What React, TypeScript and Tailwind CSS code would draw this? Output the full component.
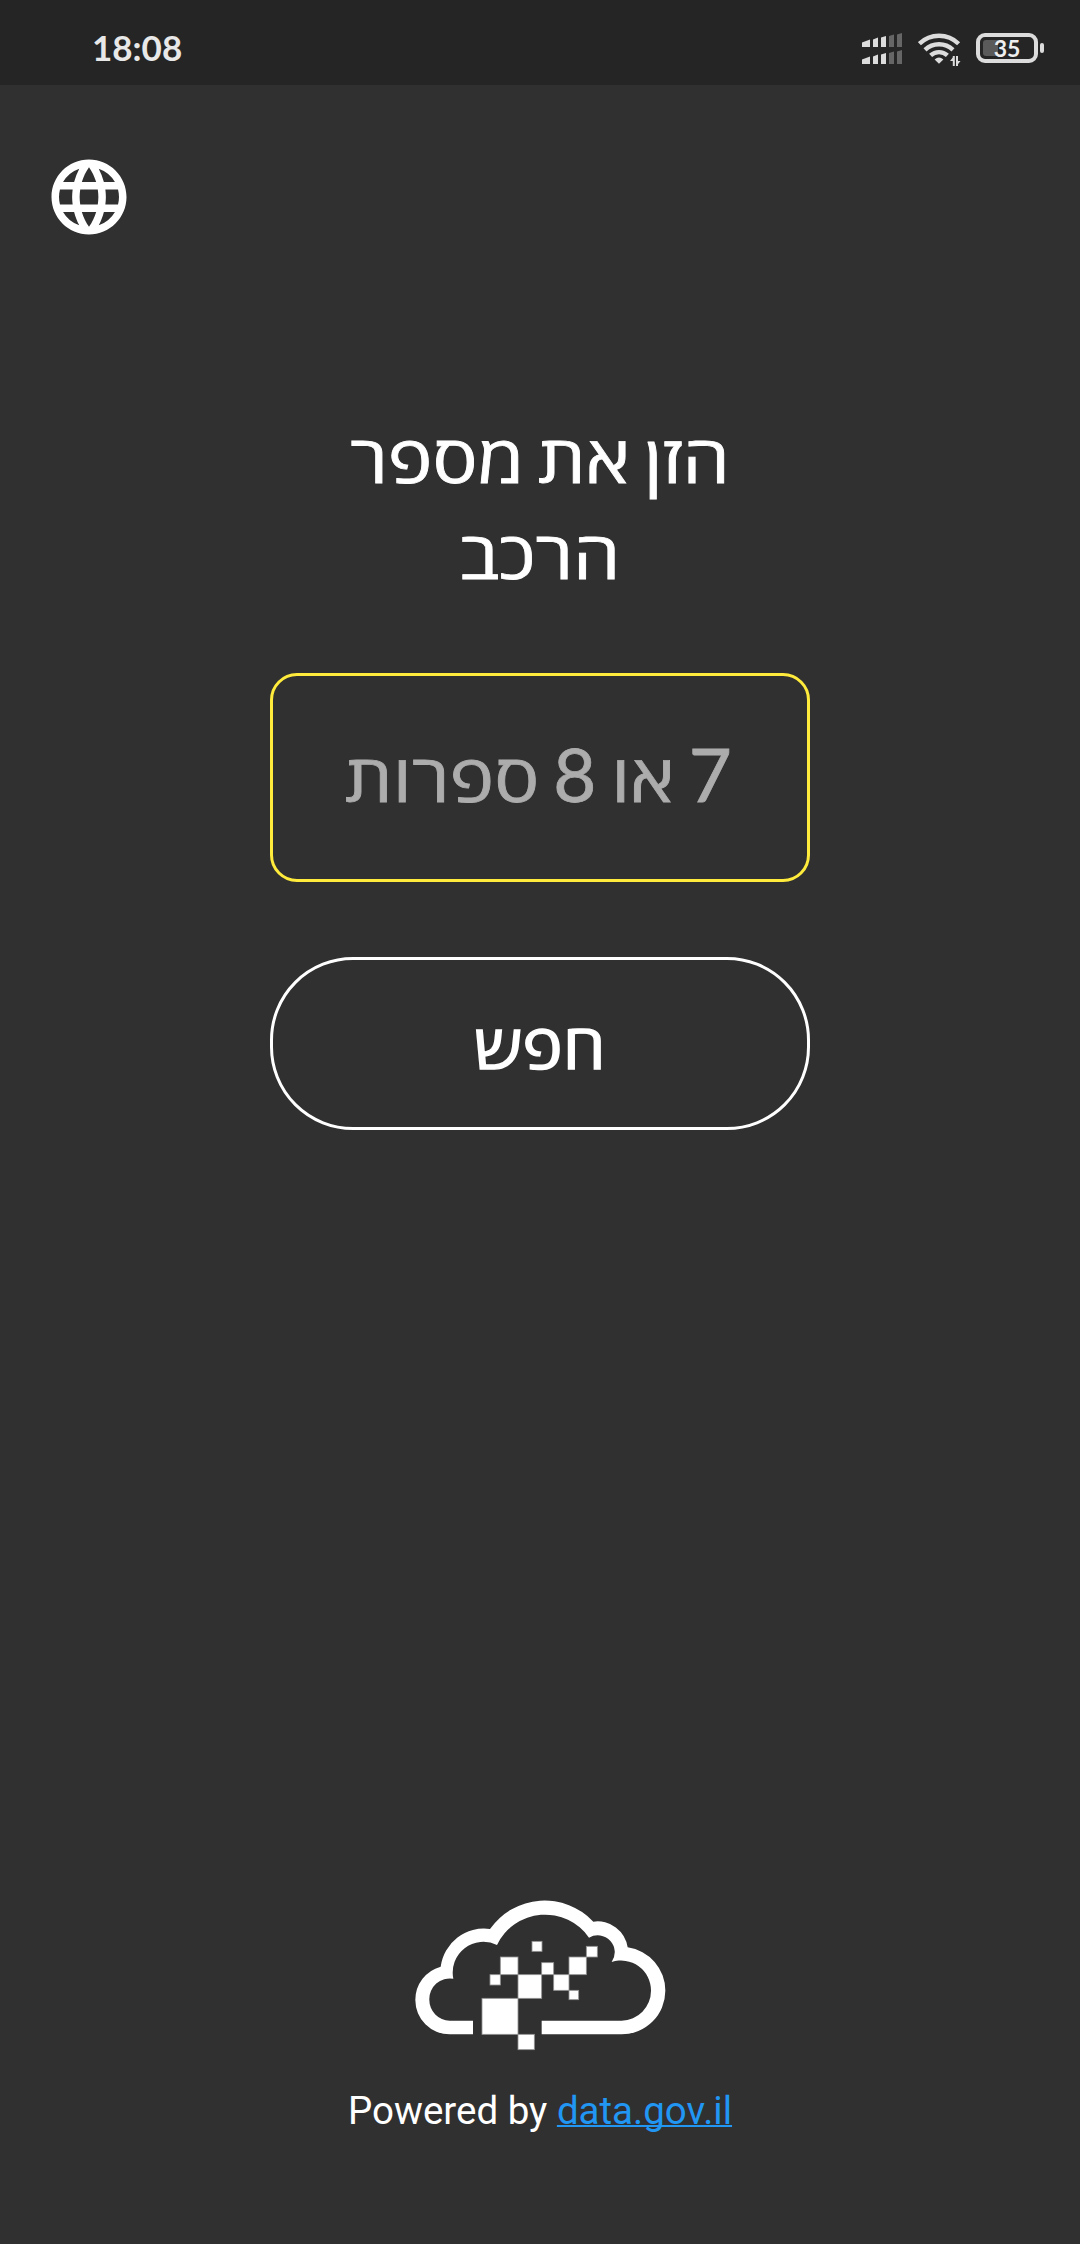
import { MdLanguage } from "react-icons/md";

function Signal() {
  const bars = ["M0 9.5L8 6.5V14H0Z", "M11 6.5L16 4.5V14H11Z", "M19 4.5L24 3V14H19Z"];
  const dim = ["M27 3L32 1.5V14H27Z", "M35 1.5L40 0V14H35Z"];
  return (
    <svg className="h-[31px] w-10" viewBox="0 0 40 31">
      {[0, 17].map((y) => (
        <g key={y} transform={`translate(0 ${y})`}>
          {bars.map((d) => <path key={d} d={d} fill="#dcdcdc" />)}
          {dim.map((d) => <path key={d} d={d} fill="#666" />)}
        </g>
      ))}
    </svg>
  );
}

function Wifi() {
  return (
    <svg className="h-[34px] w-[43px]" viewBox="0 0 43 34" fill="none" stroke="#dcdcdc" strokeWidth="4.4">
      <path d="M1.4 10.7A28 28 0 0 1 40.6 10.7" />
      <path d="M7 16.8A20.5 20.5 0 0 1 35 16.8" />
      <path d="M12.6 22.4A12.5 12.5 0 0 1 29.4 22.4" />
      <path d="M16.6 26.5Q21 22.5 25.4 26.5L21 30.8Z" fill="#dcdcdc" stroke="none" />
      <path d="M35.8 23V33M39 33V23" strokeWidth="2" />
      <path d="M32 28L36 23V28ZM42.5 28L38.5 33V28Z" fill="#dcdcdc" stroke="none" />
    </svg>
  );
}

function Battery() {
  return (
    <div className="flex items-center gap-[2px]">
      <div className="relative flex h-[30px] w-[62px] items-center justify-center rounded-[9px] border-4 border-[#dcdcdc]">
        <div className="absolute left-[3px] top-[3px] h-4 w-[15px] rounded-l-[3px] bg-[#5a5a5a]" />
        <span className="relative font-['Lato'] text-[23px] font-bold leading-none text-[#eee]">35</span>
      </div>
      <div className="h-[10px] w-1 rounded-[2px] bg-[#dcdcdc]" />
    </div>
  );
}

const squares = [
  [396, 169, 30, 30], [559, 184, 33, 32], [301, 216, 53, 53], [507, 216, 52, 53],
  [425, 233, 36, 36], [270, 269, 31, 31], [354, 269, 71, 71], [461, 269, 46, 47],
  [507, 316, 29, 28], [246, 340, 108, 108], [354, 448, 49, 46],
];

function CloudLogo() {
  return (
    <svg className="h-[180px] w-[280px]" viewBox="0 0 840 540" fill="white">
      <path d="M219 448H149A103 103 0 0 1 46 345A103 103 0 0 1 122 245A131 131 0 0 1 270 132A200 200 0 0 1 580 110A91 91 0 0 1 683 187A131 131 0 0 1 796 317A131 131 0 0 1 665 448H425V407H665A90 90 0 0 0 753 317A90 90 0 0 0 635 231A51 51 0 0 0 567 158A160 160 0 0 0 291 180A92 92 0 0 0 160 281A62 62 0 0 0 88 345A62 62 0 0 0 149 407H219Z" />
      {squares.map(([x, y, w, h]) => (
        <rect key={`${x}-${y}`} x={x} y={y} width={w} height={h} stroke="#929292" strokeWidth="2.5" />
      ))}
    </svg>
  );
}

export default function App() {
  return (
    <div className="flex h-[2244px] w-[1080px] flex-col bg-[#303030] font-['Roboto',sans-serif] text-white">
      <header className="flex h-[85px] items-start justify-between bg-[#252525] pl-[92px] pr-9">
        <span className="mt-[26px] font-['Lato'] text-[35px] font-bold leading-[42px] text-[#e8e8e8]">18:08</span>
        <div className="mt-[33px] flex items-start">
          <Signal />
          <div className="ml-[16px]"><Wifi /></div>
          <div className="ml-[15px]"><Battery /></div>
        </div>
      </header>
      <main className="flex flex-1 flex-col items-center">
        <button className="ml-[44px] mt-[67px] self-start" aria-label="Language">
          <MdLanguage className="size-[90px]" />
        </button>
        <h1 dir="rtl" className="mt-[167px] w-[380px] scale-x-114 text-center font-['Open_Sans','Noto_Sans',sans-serif] text-[66px] font-normal leading-[96px] [-webkit-text-stroke:0.8px_white] [word-spacing:-5px]">
          הזן את מספר הרכב
        </h1>
        <div dir="rtl" className="mt-[72px] flex h-[209px] w-[540px] items-center justify-center rounded-[27px] border-3 border-[#ffeb3b] font-['Open_Sans','Noto_Sans',sans-serif] text-[66px] leading-[96px] text-[#acacac] [-webkit-text-stroke:0.8px_#acacac]">
          <span className="mb-1 scale-x-114 [word-spacing:-7px]">
            <span className="inline-block scale-x-88 font-['Lato'] text-[74px] leading-none">7</span> או <span className="inline-block scale-x-88 font-['Lato'] text-[74px] leading-none">8</span> ספרות
          </span>
        </div>
        <button dir="rtl" className="mt-[75px] flex h-[173px] w-[540px] items-center justify-center rounded-[83px] border-3 border-white font-['Open_Sans','Noto_Sans',sans-serif] text-[62px] [-webkit-text-stroke:1.4px_white]">
          <span className="mt-[3px] scale-x-110">חפש</span>
        </button>
        <div className="mt-auto"><CloudLogo /></div>
        <p className="mb-[110px] mt-[22px] whitespace-nowrap text-[38.5px] leading-[47px]">
          Powered by{" "}
          <a className="text-[#2196f3] underline decoration-2 [text-decoration-skip-ink:none]">data.gov.il</a>
        </p>
      </main>
    </div>
  );
}
